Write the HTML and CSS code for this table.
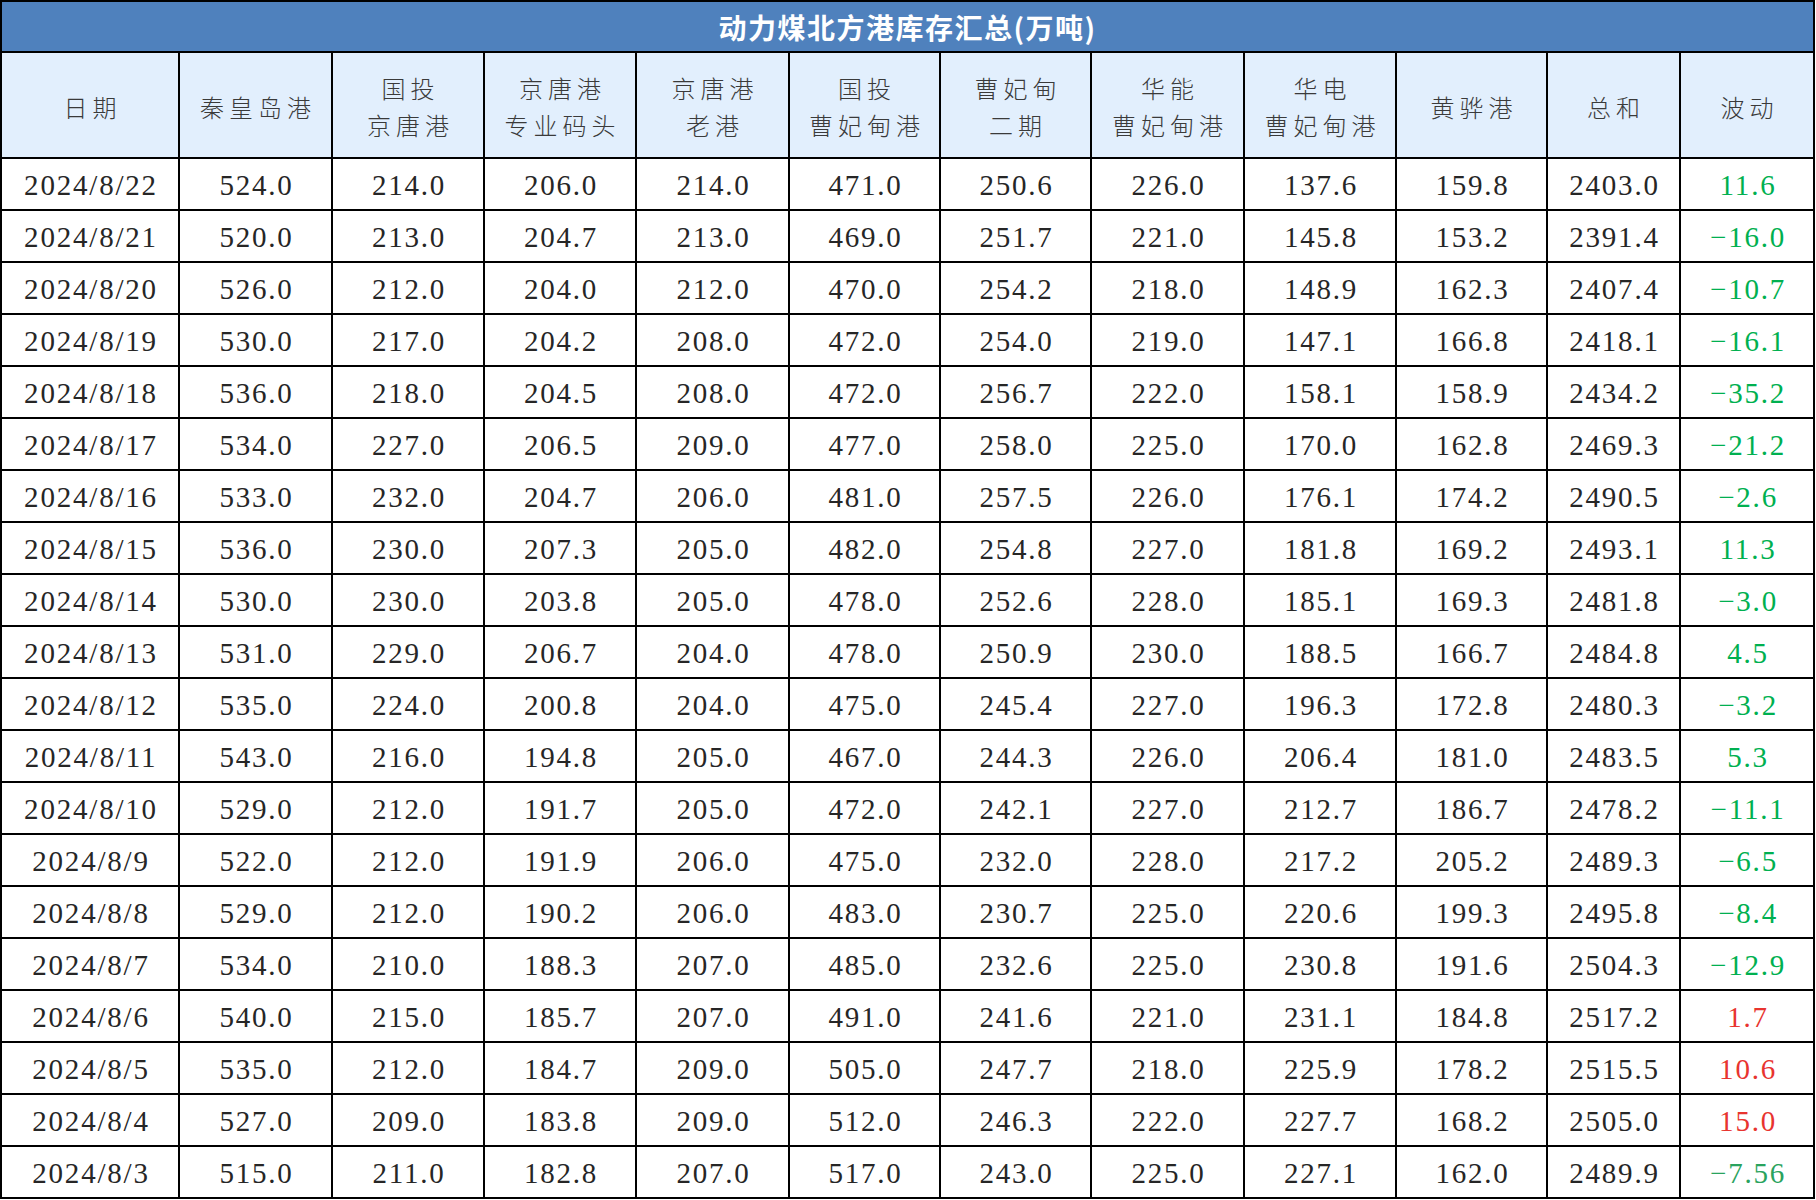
FILE: index.html
```html
<!DOCTYPE html>
<html lang="zh-CN">
<head>
<meta charset="utf-8">
<title>动力煤北方港库存汇总(万吨)</title>
<link rel="stylesheet" href="styles.css">
</head>
<body>
<table class="sheet">
  <colgroup>
    <col class="w-date"><col class="w153"><col class="w152"><col class="w152"><col class="w153"><col class="w151"><col class="w151"><col class="w153"><col class="w152"><col class="w151"><col class="w-sum"><col class="w-chg">
  </colgroup>
  <thead>
    <tr class="title-row"><th colspan="12" class="title">动力煤北方港库存汇总(万吨)</th></tr>
    <tr class="head-row">
      <th>日期</th>
      <th>秦皇岛港</th>
      <th>国投<br>京唐港</th>
      <th>京唐港<br>专业码头</th>
      <th>京唐港<br>老港</th>
      <th>国投<br>曹妃甸港</th>
      <th>曹妃甸<br>二期</th>
      <th>华能<br>曹妃甸港</th>
      <th>华电<br>曹妃甸港</th>
      <th>黄骅港</th>
      <th>总和</th>
      <th>波动</th>
    </tr>
  </thead>
  <tbody>
    <tr><td>2024/8/22</td><td>524.0</td><td>214.0</td><td>206.0</td><td>214.0</td><td>471.0</td><td>250.6</td><td>226.0</td><td>137.6</td><td>159.8</td><td>2403.0</td><td class="down">11.6</td></tr>
    <tr><td>2024/8/21</td><td>520.0</td><td>213.0</td><td>204.7</td><td>213.0</td><td>469.0</td><td>251.7</td><td>221.0</td><td>145.8</td><td>153.2</td><td>2391.4</td><td class="down">−16.0</td></tr>
    <tr><td>2024/8/20</td><td>526.0</td><td>212.0</td><td>204.0</td><td>212.0</td><td>470.0</td><td>254.2</td><td>218.0</td><td>148.9</td><td>162.3</td><td>2407.4</td><td class="down">−10.7</td></tr>
    <tr><td>2024/8/19</td><td>530.0</td><td>217.0</td><td>204.2</td><td>208.0</td><td>472.0</td><td>254.0</td><td>219.0</td><td>147.1</td><td>166.8</td><td>2418.1</td><td class="down">−16.1</td></tr>
    <tr><td>2024/8/18</td><td>536.0</td><td>218.0</td><td>204.5</td><td>208.0</td><td>472.0</td><td>256.7</td><td>222.0</td><td>158.1</td><td>158.9</td><td>2434.2</td><td class="down">−35.2</td></tr>
    <tr><td>2024/8/17</td><td>534.0</td><td>227.0</td><td>206.5</td><td>209.0</td><td>477.0</td><td>258.0</td><td>225.0</td><td>170.0</td><td>162.8</td><td>2469.3</td><td class="down">−21.2</td></tr>
    <tr><td>2024/8/16</td><td>533.0</td><td>232.0</td><td>204.7</td><td>206.0</td><td>481.0</td><td>257.5</td><td>226.0</td><td>176.1</td><td>174.2</td><td>2490.5</td><td class="down">−2.6</td></tr>
    <tr><td>2024/8/15</td><td>536.0</td><td>230.0</td><td>207.3</td><td>205.0</td><td>482.0</td><td>254.8</td><td>227.0</td><td>181.8</td><td>169.2</td><td>2493.1</td><td class="down">11.3</td></tr>
    <tr><td>2024/8/14</td><td>530.0</td><td>230.0</td><td>203.8</td><td>205.0</td><td>478.0</td><td>252.6</td><td>228.0</td><td>185.1</td><td>169.3</td><td>2481.8</td><td class="down">−3.0</td></tr>
    <tr><td>2024/8/13</td><td>531.0</td><td>229.0</td><td>206.7</td><td>204.0</td><td>478.0</td><td>250.9</td><td>230.0</td><td>188.5</td><td>166.7</td><td>2484.8</td><td class="down">4.5</td></tr>
    <tr><td>2024/8/12</td><td>535.0</td><td>224.0</td><td>200.8</td><td>204.0</td><td>475.0</td><td>245.4</td><td>227.0</td><td>196.3</td><td>172.8</td><td>2480.3</td><td class="down">−3.2</td></tr>
    <tr><td>2024/8/11</td><td>543.0</td><td>216.0</td><td>194.8</td><td>205.0</td><td>467.0</td><td>244.3</td><td>226.0</td><td>206.4</td><td>181.0</td><td>2483.5</td><td class="down">5.3</td></tr>
    <tr><td>2024/8/10</td><td>529.0</td><td>212.0</td><td>191.7</td><td>205.0</td><td>472.0</td><td>242.1</td><td>227.0</td><td>212.7</td><td>186.7</td><td>2478.2</td><td class="down">−11.1</td></tr>
    <tr><td>2024/8/9</td><td>522.0</td><td>212.0</td><td>191.9</td><td>206.0</td><td>475.0</td><td>232.0</td><td>228.0</td><td>217.2</td><td>205.2</td><td>2489.3</td><td class="down">−6.5</td></tr>
    <tr><td>2024/8/8</td><td>529.0</td><td>212.0</td><td>190.2</td><td>206.0</td><td>483.0</td><td>230.7</td><td>225.0</td><td>220.6</td><td>199.3</td><td>2495.8</td><td class="down">−8.4</td></tr>
    <tr><td>2024/8/7</td><td>534.0</td><td>210.0</td><td>188.3</td><td>207.0</td><td>485.0</td><td>232.6</td><td>225.0</td><td>230.8</td><td>191.6</td><td>2504.3</td><td class="down">−12.9</td></tr>
    <tr><td>2024/8/6</td><td>540.0</td><td>215.0</td><td>185.7</td><td>207.0</td><td>491.0</td><td>241.6</td><td>221.0</td><td>231.1</td><td>184.8</td><td>2517.2</td><td class="up">1.7</td></tr>
    <tr><td>2024/8/5</td><td>535.0</td><td>212.0</td><td>184.7</td><td>209.0</td><td>505.0</td><td>247.7</td><td>218.0</td><td>225.9</td><td>178.2</td><td>2515.5</td><td class="up">10.6</td></tr>
    <tr><td>2024/8/4</td><td>527.0</td><td>209.0</td><td>183.8</td><td>209.0</td><td>512.0</td><td>246.3</td><td>222.0</td><td>227.7</td><td>168.2</td><td>2505.0</td><td class="up">15.0</td></tr>
    <tr><td>2024/8/3</td><td>515.0</td><td>211.0</td><td>182.8</td><td>207.0</td><td>517.0</td><td>243.0</td><td>225.0</td><td>227.1</td><td>162.0</td><td>2489.9</td><td class="down2">−7.56</td></tr>
  </tbody>
</table>
</body>
</html>
```
FILE: styles.css
```css
html, body {
  margin: 0;
  padding: 0;
  background: #ffffff;
}

.sheet {
  border-collapse: collapse;
  table-layout: fixed;
  width: 1815px;
}

.w-date { width: 178px; }
.w153 { width: 153px; }
.w152 { width: 152px; }
.w151 { width: 151px; }
.w-sum { width: 133px; }
.w-chg { width: 134px; }

.sheet th,
.sheet td {
  border: 2px solid #000;
  padding: 0;
  text-align: center;
  vertical-align: middle;
  overflow: hidden;
  white-space: nowrap;
}

.title-row { height: 51px; }

.title {
  background: #4f81bd;
  color: #ffffff;
  font-family: "Noto Sans CJK SC", sans-serif;
  font-weight: 700;
  font-size: 28px;
  letter-spacing: 1.5px;
  line-height: 1;
}

.head-row { height: 106px; }

.head-row th {
  background: #e2effd;
  color: #3a3a3a;
  font-family: "Noto Sans CJK SC", sans-serif;
  font-weight: 300;
  font-size: 24px;
  letter-spacing: 5px;
  padding-left: 5px;
  padding-top: 2px;
  line-height: 37px;
}

.sheet tbody tr { height: 52px; }

.sheet tbody td {
  color: #262626;
  font-family: "Liberation Serif", "Noto Sans CJK SC", serif;
  font-size: 29px;
  letter-spacing: 1.8px;
  padding-top: 3px;
  padding-left: 2px;
  line-height: 1;
}

.sheet tbody td.down { color: #00b050; }
.sheet tbody td.down2 { color: #2aa35e; }
.sheet tbody td.up { color: #e8342f; }
```
